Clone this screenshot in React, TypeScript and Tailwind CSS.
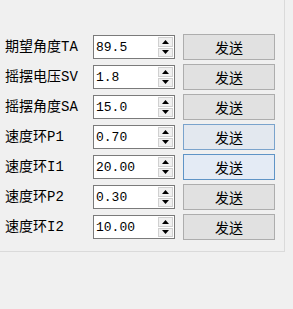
const rows = [
  { label: "期望角度TA", value: "89.5", btn: "normal" },
  { label: "摇摆电压SV", value: "1.8", btn: "normal" },
  { label: "摇摆角度SA", value: "15.0", btn: "normal" },
  { label: "速度环P1", value: "0.70", btn: "hover" },
  { label: "速度环I1", value: "20.00", btn: "focus" },
  { label: "速度环P2", value: "0.30", btn: "normal" },
  { label: "速度环I2", value: "10.00", btn: "normal" },
];

const Arrow = ({ up }: { up?: boolean }) => (
  <svg width="7" height="4" viewBox="0 0 7 4">
    {up ? <polygon points="3.5,0 7,4 0,4" fill="#000" /> : <polygon points="0,0 7,0 3.5,4" fill="#000" />}
  </svg>
);

const btnStyle: Record<string, string> = {
  normal: "bg-[#e1e1e1] border-[#adadad]",
  hover: "bg-[#e3e8ef] border-[#7aa3cc]",
  focus: "bg-[#e4ebf5] border-[#5f94c6]",
};

export default function App() {
  return (
    <div className="w-[293px] h-[309px] bg-[#f0f0f0] overflow-hidden">
      <div
        className="w-[285px] h-[252px] border-r border-b border-[#dadada] pt-[34px] flex flex-col gap-[4px]"
        style={{ fontFamily: '"Liberation Mono", "Noto Sans CJK SC", monospace' }}
      >
        {rows.map((r) => (
          <div key={r.label} className="flex items-center h-[26px]">
            <div className="w-[93px] pl-[5px] text-[14px] text-black leading-none whitespace-nowrap">
              {r.label}
            </div>
            <div className="w-[82px] h-[24px] border border-[#7a7a7a] bg-white flex">
              <div className="flex-1 pl-[2px] flex items-center text-[13px] text-black leading-none">
                {r.value}
              </div>
              <div className="w-[16px] flex flex-col py-[1px] pr-[1px] gap-[1px]">
                <div className="flex-1 bg-[#f0f0f0] border border-[#d0d0d0] flex items-center justify-center">
                  <Arrow up />
                </div>
                <div className="flex-1 bg-[#f0f0f0] border border-[#d0d0d0] flex items-center justify-center">
                  <Arrow />
                </div>
              </div>
            </div>
            <button
              className={`ml-[8px] w-[92px] h-[26px] border ${btnStyle[r.btn]} text-[14px] text-black leading-none flex items-center justify-center`}
              style={{ fontFamily: '"Noto Sans CJK SC", sans-serif' }}
            >
              发送
            </button>
          </div>
        ))}
      </div>
    </div>
  );
}
